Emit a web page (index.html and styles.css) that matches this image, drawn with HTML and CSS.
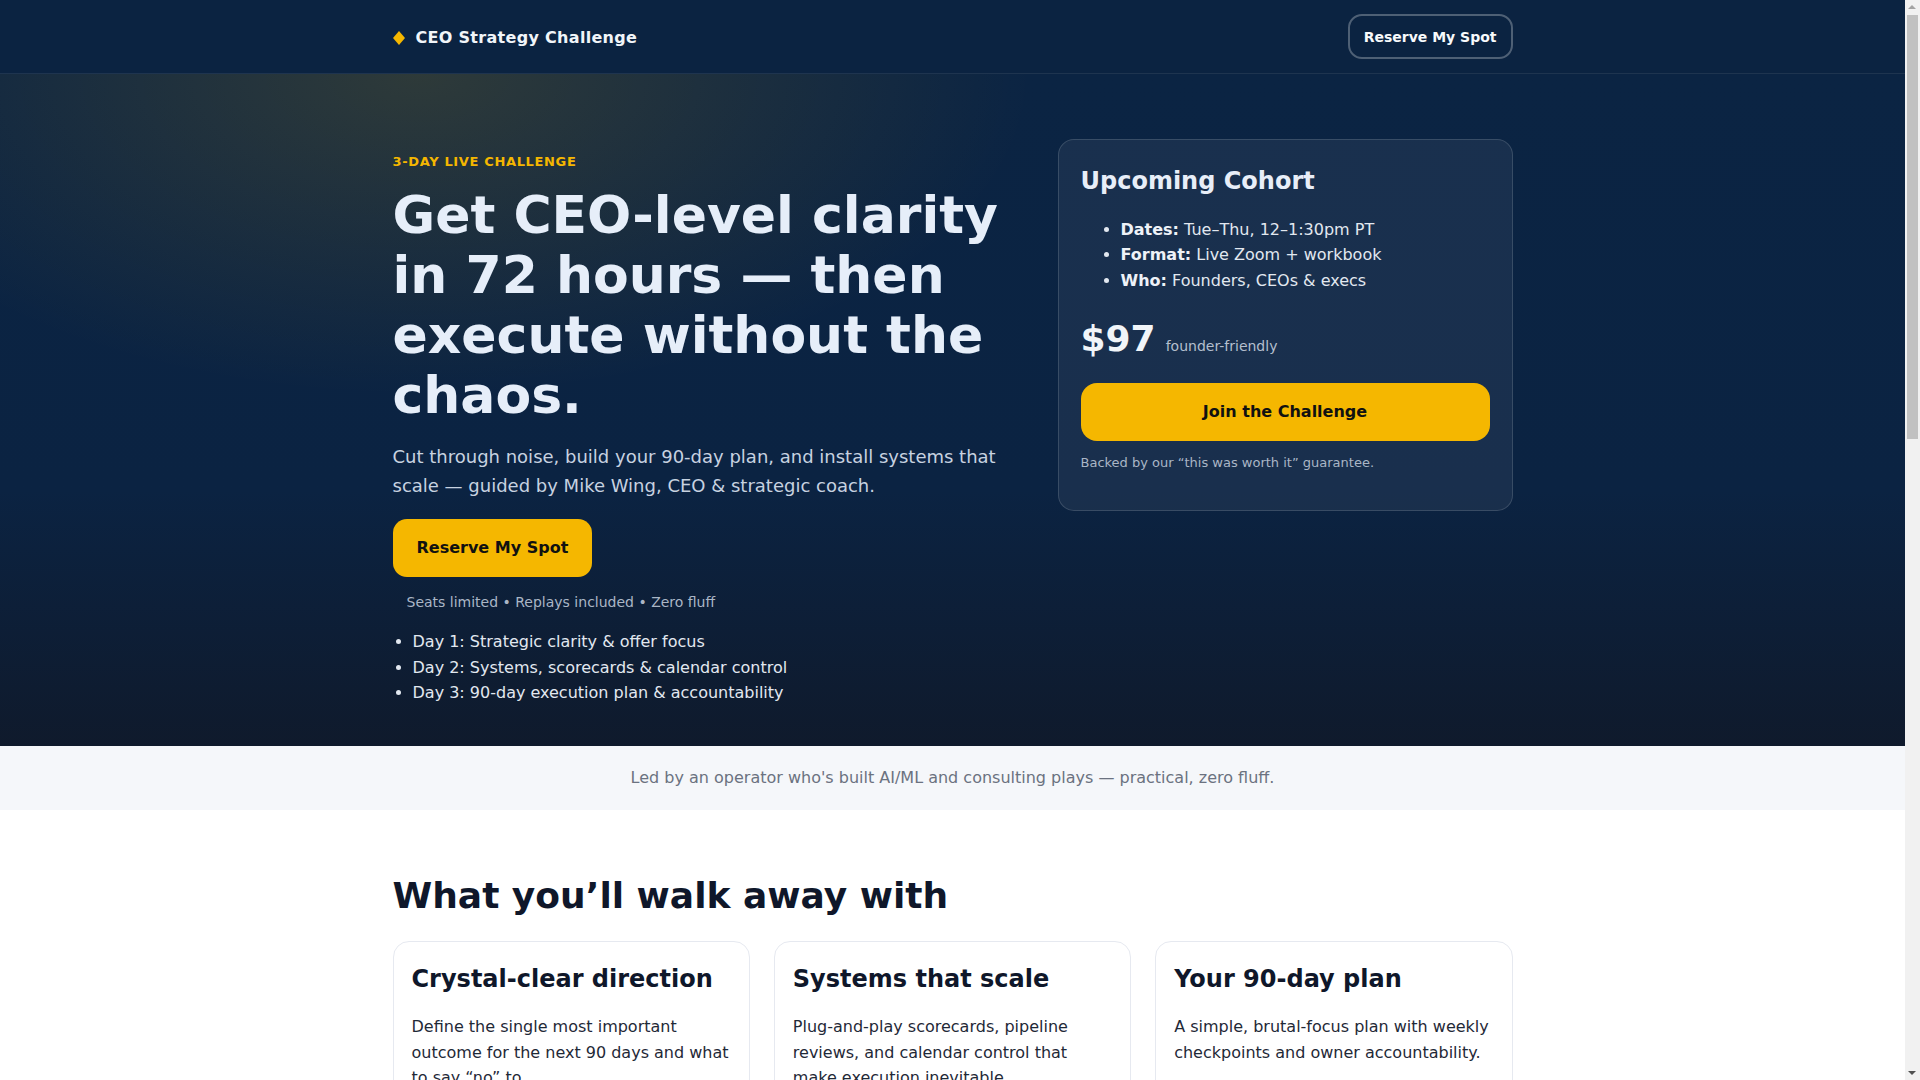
FILE: index.html
```html
<!DOCTYPE html>
<html lang="en">
<head>
<meta charset="utf-8">
<title>CEO Strategy Challenge</title>
<link rel="stylesheet" href="styles.css">
</head>
<body>
<header class="site-header">
  <div class="container header-row">
    <a class="brand" href="#">
      <svg class="brand-mark" width="12" height="14" viewBox="0 0 12 14" aria-hidden="true"><polygon points="6,0 12,7 6,14 0,7" fill="#f5b700"/></svg>
      <span>CEO Strategy Challenge</span>
    </a>
    <a class="btn-outline" href="#">Reserve My Spot</a>
  </div>
</header>

<section class="hero">
  <div class="container hero-grid">
    <div class="hero-copy">
      <p class="eyebrow">3-DAY LIVE CHALLENGE</p>
      <h1>Get CEO-level clarity in 72 hours — then execute without the chaos.</h1>
      <p class="lead">Cut through noise, build your 90-day plan, and install systems that scale — guided by Mike Wing, CEO &amp; strategic coach.</p>
      <a class="btn-primary" href="#">Reserve My Spot</a>
      <p class="note">Seats limited • Replays included • Zero fluff</p>
      <ul class="days">
        <li>Day 1: Strategic clarity &amp; offer focus</li>
        <li>Day 2: Systems, scorecards &amp; calendar control</li>
        <li>Day 3: 90-day execution plan &amp; accountability</li>
      </ul>
    </div>
    <aside class="cohort">
      <h2>Upcoming Cohort</h2>
      <ul>
        <li><strong>Dates:</strong> Tue–Thu, 12–1:30pm PT</li>
        <li><strong>Format:</strong> Live Zoom + workbook</li>
        <li><strong>Who:</strong> Founders, CEOs &amp; execs</li>
      </ul>
      <div class="price"><span class="amount">$97</span><span class="price-note">founder-friendly</span></div>
      <a class="btn-primary btn-block" href="#">Join the Challenge</a>
      <p class="guarantee">Backed by our “this was worth it” guarantee.</p>
    </aside>
  </div>
</section>

<section class="band">
  <div class="container">
    <p>Led by an operator who's built AI/ML and consulting plays — practical, zero fluff.</p>
  </div>
</section>

<section class="outcomes">
  <div class="container">
    <h2 class="section-title">What you’ll walk away with</h2>
    <div class="cards">
      <article class="card">
        <h3>Crystal-clear direction</h3>
        <p>Define the single most important outcome for the next 90 days and what to say “no” to.</p>
      </article>
      <article class="card">
        <h3>Systems that scale</h3>
        <p>Plug-and-play scorecards, pipeline reviews, and calendar control that make execution inevitable.</p>
      </article>
      <article class="card">
        <h3>Your 90-day plan</h3>
        <p>A simple, brutal-focus plan with weekly checkpoints and owner accountability.</p>
      </article>
    </div>
  </div>
</section>

<section class="coach">
  <div class="container">
    <h2 class="section-title">Meet your coach</h2>
    <p class="coach-text">Mike Wing has built and scaled AI/ML products and consulting practices, and now helps founders and CEOs turn strategy into weekly execution. No theory for its own sake — just the tools he uses with his own teams.</p>
  </div>
</section>

<section class="faq">
  <div class="container">
    <h2 class="section-title">Questions</h2>
    <div class="faq-item"><h3>What if I can't attend live?</h3><p>Every session is recorded and replays are included, along with the workbook.</p></div>
    <div class="faq-item"><h3>Who is this for?</h3><p>Founders, CEOs and executives who want a focused plan and the systems to execute it.</p></div>
    <div class="faq-item"><h3>How much time does it take?</h3><p>Three 90-minute live sessions plus light homework between days.</p></div>
    <div class="faq-item"><h3>Do I need to prepare anything?</h3><p>Bring your current numbers and your calendar — we'll build the rest together.</p></div>
    <div class="faq-item"><h3>Is there a guarantee?</h3><p>Yes — if it wasn't worth it, just tell us and we'll make it right.</p></div>
  </div>
</section>

<section class="final-cta">
  <div class="container final-inner">
    <h2>Ready to lead with clarity?</h2>
    <a class="btn-primary" href="#">Reserve My Spot</a>
  </div>
</section>

<footer class="site-footer">
  <div class="container">
    <p>© CEO Strategy Challenge</p>
  </div>
</footer>

<div class="scrollbar" aria-hidden="true">
  <span class="sb-arrow sb-up"></span>
  <span class="sb-thumb"></span>
  <span class="sb-arrow sb-down"></span>
</div>
</body>
</html>
```

FILE: styles.css
```css
* { box-sizing: border-box; }

body {
  margin: 0 15px 0 0;
  font-family: "DejaVu Sans", "Noto Sans", sans-serif;
  line-height: 1.6;
  color: #0f172a;
  background: #ffffff;
}

a { text-decoration: none; }

.container {
  max-width: 1120px;
  margin: 0 auto;
}

/* Scrollbar strip (as drawn in the screenshot) */
.scrollbar {
  position: fixed;
  top: 0;
  right: 0;
  width: 15px;
  height: 100vh;
  background: #f1f1f1;
}

.sb-thumb {
  position: absolute;
  top: 15px;
  left: 2px;
  width: 11px;
  height: 424px;
  background: #c1c1c1;
}

.sb-arrow {
  position: absolute;
  left: 3px;
  width: 0;
  height: 0;
  border-left: 4.5px solid transparent;
  border-right: 4.5px solid transparent;
}

.sb-up {
  top: 5px;
  border-bottom: 4.5px solid #a3a3a3;
}

.sb-down {
  bottom: 5px;
  border-top: 4.5px solid #505050;
}

/* Header */
.site-header {
  background: #0b2341;
  border-bottom: 1px solid rgba(255, 255, 255, 0.08);
}

.header-row {
  display: flex;
  justify-content: space-between;
  align-items: center;
  padding: 14px 0;
}

.brand {
  display: flex;
  align-items: center;
  gap: 11px;
  color: #f1f5f9;
  font-weight: 700;
  font-size: 16px;
  letter-spacing: 0.3px;
  padding-top: 2px;
}

.brand-mark { display: block; }

.btn-outline {
  display: inline-block;
  color: #f8fafc;
  font-weight: 700;
  font-size: 14px;
  padding: 9.5px 14px;
  border: 2px solid rgba(255, 255, 255, 0.28);
  border-radius: 14px;
}

/* Hero */
.hero {
  background:
    radial-gradient(ellipse 820px 430px at 22% 0%, rgba(245, 183, 0, 0.15), rgba(245, 183, 0, 0) 75%),
    linear-gradient(180deg, #0b2443 0%, #0b2342 62%, #0f1a2c 100%);
  padding: 65px 0 24px;
  color: #e6eef9;
}

.hero-grid {
  display: grid;
  grid-template-columns: minmax(0, 1fr) 455px;
  gap: 28px;
  align-items: start;
}

.eyebrow {
  margin: 13px 0 0;
  color: #f5b700;
  font-size: 13px;
  font-weight: 700;
  letter-spacing: 0.05em;
}

.hero h1 {
  margin: 13px 0 0;
  font-size: 52px;
  line-height: 1.15;
  font-weight: 700;
  color: #e6eef9;
}

.lead {
  margin: 18px 0 0;
  font-size: 18px;
  color: #c7d2e0;
}

.btn-primary {
  display: inline-block;
  margin-top: 18px;
  background: #f5b700;
  color: #111111;
  font-weight: 700;
  font-size: 16px;
  padding: 16px 24px;
  border-radius: 14px;
}

.note {
  margin: 14px 0 0 14px;
  font-size: 14px;
  color: #aab6c6;
}

.days {
  margin: 16px 0 16px;
  padding-left: 20px;
  color: #e2e8f0;
}

/* Cohort card */
.cohort {
  background: rgba(255, 255, 255, 0.06);
  border: 1px solid rgba(255, 255, 255, 0.14);
  border-radius: 16px;
  padding: 22px;
}

.cohort h2 {
  margin: 0 0 16px;
  font-size: 24px;
  color: #e8eef8;
}

.cohort ul {
  margin: 16px 0;
  padding-left: 40px;
  color: #e2e8f0;
}

.cohort strong { color: #eef2f8; }

.price {
  display: flex;
  align-items: baseline;
  gap: 10px;
  margin: 16px 0 0;
}

.amount {
  font-size: 36px;
  font-weight: 700;
  color: #f1f5f9;
}

.price-note {
  font-size: 14px;
  color: #b4bfcd;
}

.btn-block {
  display: block;
  text-align: center;
  margin-top: 16px;
  border-radius: 16px;
}

.guarantee {
  margin: 12px 0 14px;
  font-size: 13px;
  color: #aab6c6;
}

/* Band */
.band {
  background: #f5f7fa;
  padding: 19.5px 0;
}

.band p {
  margin: 0;
  text-align: center;
  color: #6b7280;
  font-size: 16px;
}

/* Outcomes */
.outcomes { padding: 64px 0; }

.section-title {
  margin: 0 0 23px;
  font-size: 36px;
  line-height: 1.2;
  color: #0f172a;
}

.cards {
  display: grid;
  grid-template-columns: repeat(3, minmax(0, 1fr));
  gap: 24px;
}

.card {
  border: 1px solid #e6e9f0;
  border-radius: 16px;
  padding: 18px;
}

.card h3 {
  margin: 0 0 16px;
  font-size: 24px;
  color: #0f172a;
}

.card p {
  margin: 0;
  color: #1f2937;
}

/* Coach */
.coach { padding: 80px 0; background: #f5f7fa; }

.coach-text {
  margin: 0;
  max-width: 760px;
  font-size: 18px;
  color: #374151;
}

/* FAQ */
.faq { padding: 64px 0; }

.faq-item {
  border-top: 1px solid #e6e9f0;
  padding: 20px 0;
}

.faq-item h3 { margin: 0 0 8px; font-size: 20px; }
.faq-item p { margin: 0; color: #374151; }

/* Final CTA */
.final-cta {
  background: #0b2341;
  padding: 128px 0;
  color: #e6eef9;
}

.final-inner {
  display: flex;
  flex-direction: column;
  align-items: center;
}

.final-inner h2 { margin: 0; font-size: 36px; }

/* Footer */
.site-footer {
  background: #081a31;
  padding: 40px 0;
}

.site-footer p {
  margin: 0;
  color: #8a97a8;
  font-size: 14px;
  text-align: center;
}
```
